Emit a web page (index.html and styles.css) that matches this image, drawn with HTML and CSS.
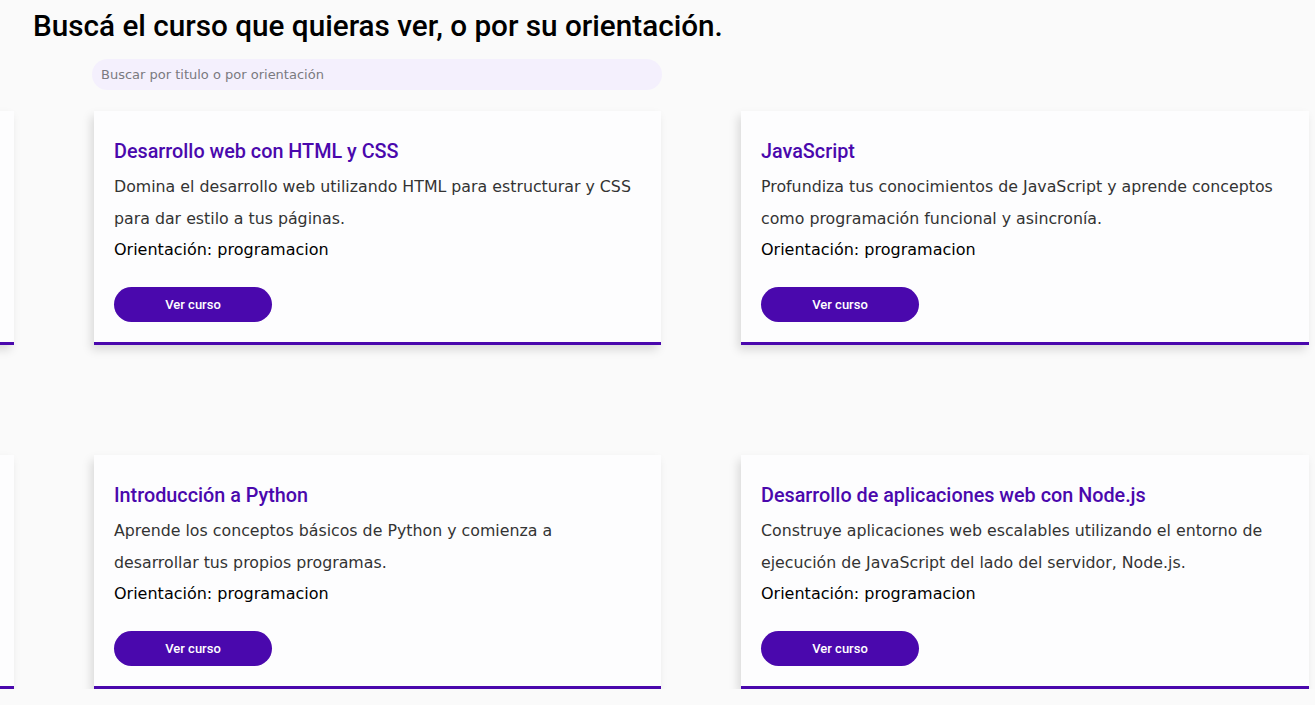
FILE: index.html
```html
<!DOCTYPE html>
<html lang="es">
<head>
<meta charset="utf-8">
<title>Cursos</title>
<link rel="stylesheet" href="styles.css">
</head>
<body>
<main class="page">
  <h1 class="heading">Buscá el curso que quieras ver, o por su orientación.</h1>
  <input class="search" type="text" placeholder="Buscar por titulo o por orientación">
  <section class="track">
    <article class="card">
      <h3 class="card-title">Curso anterior</h3>
      <p class="card-desc">Descripción del curso anterior en la lista de cursos disponibles.</p>
      <p class="card-orient">Orientación: programacion</p>
      <button class="card-btn">Ver curso</button>
    </article>
    <article class="card">
      <h3 class="card-title">Desarrollo web con HTML y CSS</h3>
      <p class="card-desc">Domina el desarrollo web utilizando HTML para estructurar y CSS para dar estilo a tus páginas.</p>
      <p class="card-orient">Orientación: programacion</p>
      <button class="card-btn">Ver curso</button>
    </article>
    <article class="card">
      <h3 class="card-title">JavaScript</h3>
      <p class="card-desc">Profundiza tus conocimientos de JavaScript y aprende conceptos como programación funcional y asincronía.</p>
      <p class="card-orient">Orientación: programacion</p>
      <button class="card-btn">Ver curso</button>
    </article>
  </section>
  <section class="track">
    <article class="card">
      <h3 class="card-title">Curso anterior</h3>
      <p class="card-desc">Descripción del curso anterior en la lista de cursos disponibles.</p>
      <p class="card-orient">Orientación: programacion</p>
      <button class="card-btn">Ver curso</button>
    </article>
    <article class="card">
      <h3 class="card-title">Introducción a Python</h3>
      <p class="card-desc">Aprende los conceptos básicos de Python y comienza a desarrollar tus propios programas.</p>
      <p class="card-orient">Orientación: programacion</p>
      <button class="card-btn">Ver curso</button>
    </article>
    <article class="card">
      <h3 class="card-title">Desarrollo de aplicaciones web con Node.js</h3>
      <p class="card-desc">Construye aplicaciones web escalables utilizando el entorno de ejecución de JavaScript del lado del servidor, Node.js.</p>
      <p class="card-orient">Orientación: programacion</p>
      <button class="card-btn">Ver curso</button>
    </article>
  </section>
</main>
</body>
</html>
```
FILE: styles.css
```css
html, body {
  margin: 0;
  padding: 0;
  background: #fafafa;
  overflow: hidden;
}
.page {
  display: flex;
  flex-direction: column;
  align-items: flex-start;
  font-family: "DejaVu Sans", sans-serif;
}
.heading {
  font-family: Roboto, "Liberation Sans", sans-serif;
  font-weight: 500;
  font-size: 29.7px;
  line-height: 36px;
  color: #000;
  margin: 8px 0 0 33px;
}
.search {
  margin: 15px 0 0 92px;
  width: 570px;
  height: 31px;
  box-sizing: border-box;
  border: none;
  outline: none;
  border-radius: 16px;
  background: #f4f0fd;
  padding: 0 9px;
  font-family: "DejaVu Sans", sans-serif;
  font-size: 13px;
  color: #333;
}
.search::placeholder {
  color: #7a7a80;
}
.track {
  display: grid;
  grid-template-columns: 567px 567px 568px;
  column-gap: 80px;
  margin-left: -553px;
  margin-top: 21px;
}
.track + .track {
  margin-top: 110px;
}
.card {
  display: flex;
  flex-direction: column;
  align-items: flex-start;
  background: #fdfdfe;
  border-bottom: 3px solid #4a08ad;
  padding: 21px 20px 20px 20px;
  height: 234px;
  box-sizing: border-box;
  box-shadow: -3px 5px 9px rgba(0, 0, 0, 0.13);
}
.card-title {
  font-family: Roboto, "Liberation Sans", sans-serif;
  font-weight: 500;
  font-size: 19.8px;
  line-height: 39px;
  color: #4a08ad;
  margin: 0;
}
.card-desc {
  margin: 0;
  max-width: 522px;
  font-size: 15.8px;
  line-height: 31.5px;
  color: #333;
}
.card-orient {
  margin: 4px 0 0;
  font-size: 16px;
  font-weight: 500;
  line-height: 24px;
  color: #000;
}
.card-btn {
  margin-top: 25px;
  width: 158px;
  height: 35px;
  border: none;
  border-radius: 18px;
  background: #4a08ad;
  color: #fff;
  font-family: Roboto, "Liberation Sans", sans-serif;
  font-weight: 500;
  font-size: 13px;
}
```
